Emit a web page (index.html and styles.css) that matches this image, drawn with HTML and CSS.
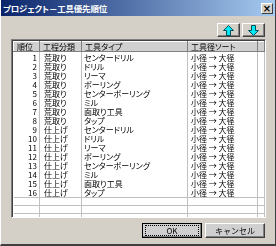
FILE: index.html
```html
<!DOCTYPE html>
<html lang="ja">
<head>
    <meta charset="UTF-8">
    <link rel="stylesheet" href="styles.css">
</head>
<body>
    <div class="window">
        <!-- Title bar -->
        <div class="titlebar">
            <span class="title">プロジェクト－工具優先順位</span>
            <span class="close">×</span>
        </div>

        <!-- Move up / down -->
        <div class="toolbar">
            <button class="btn arrow-btn">
                <svg width="11" height="11" viewBox="0 0 11 11">
                    <polygon points="5.5,0.5 10.5,5.5 7.5,5.5 7.5,10.5 3.5,10.5 3.5,5.5 0.5,5.5" fill="#00e8f0" stroke="#005060" stroke-width="1"/>
                </svg>
            </button>
            <button class="btn arrow-btn">
                <svg width="11" height="11" viewBox="0 0 11 11">
                    <polygon points="5.5,10.5 10.5,5.5 7.5,5.5 7.5,0.5 3.5,0.5 3.5,5.5 0.5,5.5" fill="#00e8f0" stroke="#005060" stroke-width="1"/>
                </svg>
            </button>
        </div>

        <!-- Priority list -->
        <div class="grid">
            <table>
                <colgroup>
                    <col style="width: 26px">
                    <col style="width: 42px">
                    <col style="width: 106px">
                    <col style="width: 70px">
                    <col>
                </colgroup>
                <thead>
                    <tr>
                        <th>順位</th>
                        <th>工程分類</th>
                        <th>工具タイプ</th>
                        <th>工具径ソート</th>
                        <th></th>
                    </tr>
                </thead>
                <tbody id="rows"></tbody>
            </table>
        </div>

        <div class="footer">
            <button class="btn default-btn"><span class="focus">OK</span></button>
            <button class="btn">キャンセル</button>
        </div>
    </div>

    <script>
        // Tool priority rows
        const steps = ['荒取り', '仕上げ'];
        const tools = ['センタードリル', 'ドリル', 'リーマ', 'ボーリング', 'センターボーリング', 'ミル', '面取り工具', 'タップ'];
        const rows = document.getElementById('rows');
        let n = 1;

        steps.forEach(step => {
            tools.forEach(tool => {
                const tr = document.createElement('tr');
                tr.innerHTML = `
                    <td class="num">${n}</td>
                    <td class="step">${step}</td>
                    <td class="tool">${tool}</td>
                    <td class="sort">小径 → 大径</td>
                    <td></td>
                `;
                rows.appendChild(tr);
                n++;
            });
        });

        // Empty grid rows below the data
        for (let i = 0; i < 3; i++) {
            const tr = document.createElement('tr');
            tr.className = 'empty' + (i === 2 ? ' last' : '');
            tr.innerHTML = '<td></td><td></td><td></td><td></td><td></td>';
            rows.appendChild(tr);
        }
    </script>
</body>
</html>
```

FILE: styles.css
```css
body {
    margin: 0;
    padding: 0;
    font-family: "Noto Sans CJK JP", sans-serif;
    font-feature-settings: "palt";
    font-size: 8px;
    color: #000;
    background-color: #d4d0c8;
}

.window {
    width: 276px;
    height: 246px;
    box-sizing: border-box;
    background-color: #d4d0c8;
    border-left: 1px solid #ffffff;
    border-right: 1px solid #404040;
    border-bottom: 2px solid #404040;
    display: flex;
    flex-direction: column;
}

/* Title bar */
.titlebar {
    height: 16px;
    background: linear-gradient(to right, #0a246a, #a6caf0);
    display: flex;
    align-items: center;
    justify-content: space-between;
    padding: 0 2px 0 2px;
}

.title {
    color: white;
    font-weight: bold;
    font-size: 8.5px;
    letter-spacing: -0.2px;
}

.close {
    width: 10px;
    height: 9px;
    background-color: #d4d0c8;
    border: 1px solid;
    border-color: #ffffff #404040 #404040 #ffffff;
    font-size: 10px;
    line-height: 9px;
    text-align: center;
    font-weight: bold;
    font-family: "DejaVu Sans", sans-serif;
    color: #000;
}

/* Buttons */
.btn {
    background-color: #d4d0c8;
    border: 1px solid;
    border-color: #ffffff #404040 #404040 #ffffff;
    box-shadow: inset -1px -1px 0 #808080;
    font-family: inherit;
    font-size: 8px;
    color: #000;
    padding: 0;
    display: flex;
    align-items: center;
    justify-content: center;
}

.toolbar {
    display: flex;
    justify-content: flex-end;
    gap: 2px;
    padding: 7px 10px 0 0;
}

.arrow-btn {
    width: 23px;
    height: 14px;
}

/* Grid */
.grid {
    margin: 2px 9px 0 10px;
    height: 176px;
    background-color: white;
    border: 1px solid;
    border-color: #808080 #ffffff #ffffff #808080;
    box-shadow: inset 1px 1px 0 #404040;
    padding: 1px 0 0 1px;
    overflow: hidden;
    filter: grayscale(1);
}

table {
    width: 100%;
    height: 100%;
    border-collapse: collapse;
    table-layout: fixed;
}

th {
    height: 9px;
    padding: 0 0 0 3px;
    background-color: #d4d0c8;
    font-weight: normal;
    text-align: left;
    line-height: 9px;
    border: 1px solid;
    border-color: #ffffff #808080 #808080 #ffffff;
    white-space: nowrap;
    overflow: hidden;
}

td {
    height: 9px;
    line-height: 9px;
    padding: 0;
    border-right: 1px solid #c0c0c0;
    white-space: nowrap;
    overflow: hidden;
}

tbody tr:first-child td {
    padding-top: 1px;
}

td.num {
    text-align: right;
    padding-right: 2px;
}

td.step {
    padding-left: 4px;
}

td.tool {
    padding-left: 2px;
}

td.sort {
    padding-left: 3px;
}

tr.empty td {
    height: 7px;
    border-top: 1px solid #c0c0c0;
}

tr.empty.last td {
    height: auto;
}

/* Footer */
.footer {
    display: flex;
    justify-content: flex-end;
    gap: 3px;
    padding: 5px 10px 0 0;
    filter: grayscale(1);
}

.footer .btn {
    width: 60px;
    height: 15px;
}

.default-btn {
    outline: 1px solid #000;
    outline-offset: -1px;
}

.focus {
    display: block;
    width: 52px;
    height: 9px;
    line-height: 9px;
    border: 1px dotted #000;
    text-align: center;
}
```
